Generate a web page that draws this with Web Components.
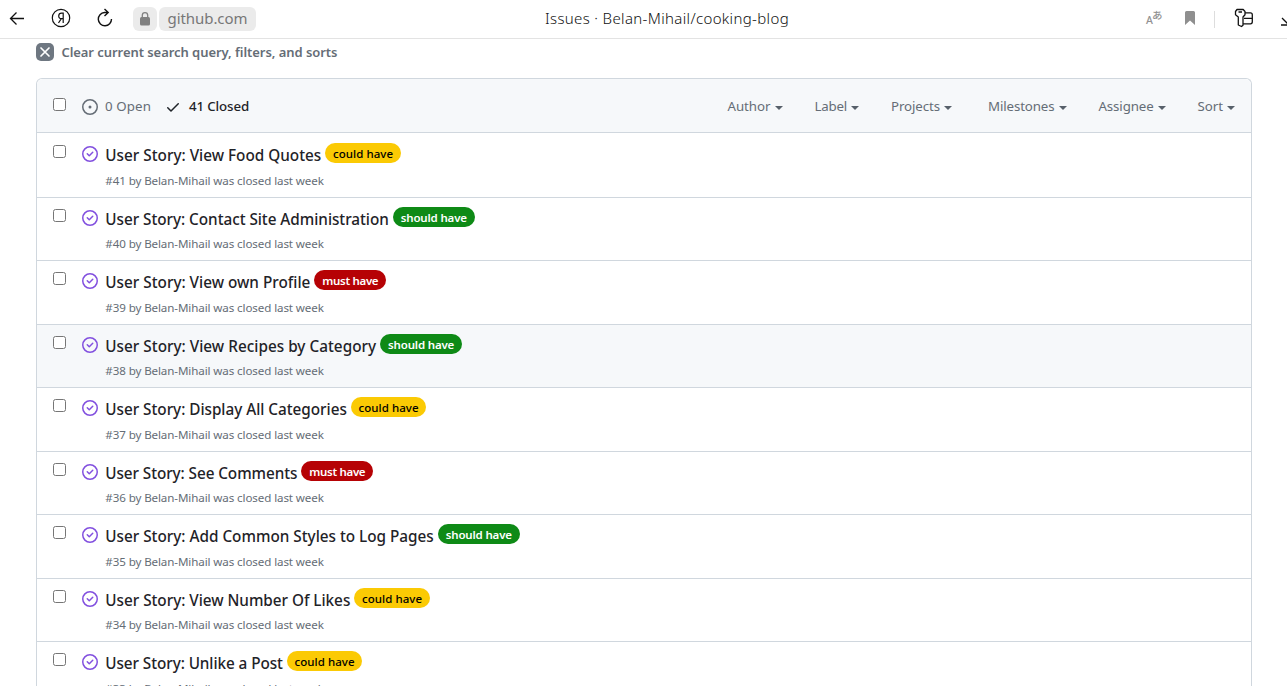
<!DOCTYPE html>
<html lang="en">
<head>
<meta charset="utf-8">
<title>Issues · Belan-Mihail/cooking-blog</title>
<style>
html,body{margin:0;height:100%;overflow:hidden;background:#fff}
body{font-family:"Noto Sans","Open Sans",sans-serif;color:#1f2328}
</style>
</head>
<body>
<app-page></app-page>
<script>
const define=(name,html,setup)=>{
  const t=document.createElement('template');t.innerHTML=html;
  customElements.define(name,class extends HTMLElement{
    connectedCallback(){
      if(this.shadowRoot)return;
      this.attachShadow({mode:'open'}).append(t.content.cloneNode(true));
      if(setup)setup(this,this.shadowRoot);
    }
  });
};

/* One line of text tracked to a given measure */
define('text-line',`<style>:host{display:block;white-space:pre;flex:none}span{display:inline-block}</style><span><slot></slot></span>`,(el,r)=>{
  const s=r.querySelector('span'),w=+el.getAttribute('w'),n=el.textContent.length;
  el.style.width=w+'px';
  s.style.letterSpacing=((w-s.getBoundingClientRect().width)/n)+'px';
});

define('check-box',`<style>:host{display:block;box-sizing:border-box;flex:none;width:13px;height:13px;border:1px solid #767676;border-radius:2.5px;background:#fff}</style>`);

define('label-pill',`<style>
:host{display:flex;flex:none;box-sizing:border-box;height:20px;border-radius:10px;justify-content:center;font-size:11.5px;line-height:21px;font-weight:600}
:host([kind=could]){background:#fbca04;color:#000;width:75.5px;font-weight:500}
:host([kind=should]){background:#0e8a16;color:#fff;width:82px}
:host([kind=must]){background:#b60205;color:#fff;width:72px}
</style><slot></slot>`);

define('issue-row',`<style>
:host{display:flex;box-sizing:border-box;height:64px;border-top:1px solid #d0d7de;padding-left:16px;align-items:flex-start;background:#fff}
:host([short]){height:63px}
:host([first]){border-top-color:transparent;background-clip:padding-box}
:host([hover]){background:#f6f8fa}
check-box{margin-top:11px}
svg{margin:12px 0 0 16px;flex:none}
.body{height:100%;display:flex;flex-direction:column;justify-content:space-between;margin-left:7.3px}
.top{display:flex;align-items:flex-start;gap:4px}
.title{font-size:15.3px;font-weight:460;line-height:22px;margin-top:10px}
label-pill{margin-top:9px}
.meta{font-size:11.6px;line-height:16px;color:#656d76;margin-bottom:8px}
</style>
<check-box></check-box>
<svg width="16" height="16" viewBox="0 0 16 16" fill="#8250df"><path d="M11.28 6.78a.75.75 0 0 0-1.06-1.06L7.25 8.69 5.78 7.22a.75.75 0 0 0-1.06 1.06l2 2a.75.75 0 0 0 1.06 0l3.5-3.5Z"/><path d="M16 8A8 8 0 1 1 0 8a8 8 0 0 1 16 0Zm-1.5 0a6.5 6.5 0 1 0-13 0 6.5 6.5 0 0 0 13 0Z"/></svg>
<div class="body"><div class="top"></div><div class="meta"></div></div>`,(el,r)=>{
  const a=k=>el.getAttribute(k),pw={could:60,should:66,must:56}[a('kind')];
  r.querySelector('.top').innerHTML=`<text-line class="title" w="${a('w')}">User Story: ${a('name')}</text-line><label-pill kind="${a('kind')}"><text-line w="${pw}">${a('kind')} have</text-line></label-pill>`;
  r.querySelector('.meta').innerHTML=`<text-line w="218.5">#${a('num')} by Belan-Mihail was closed last week</text-line>`;
});

define('filter-menu',`<style>
:host{display:flex;align-items:center;gap:4px;height:20px}
i{border:4px solid transparent;border-top-color:#57606a;border-bottom:0;margin-top:4px}
</style><slot></slot><i></i>`);

define('list-header',`<style>
:host{display:flex;box-sizing:border-box;height:54px;padding:0 16px;background:#f6f8fa;border-bottom:1px solid #d0d7de;font-size:13.3px;line-height:20px;color:#656d76;align-items:center;border-radius:6px 6px 0 0}
check-box{margin-bottom:3px}
svg{flex:none;margin-top:2px}
.o{margin:2px 7px 0 16px}.c{margin:2px 8px 0 14px}
b{font-weight:500;color:#1f2328}
nav{display:flex;flex:none;margin-left:auto}
filter-menu+filter-menu{margin-left:32px}
filter-menu.wide{margin-left:36px}
</style>
<check-box></check-box>
<svg class="o" width="16" height="16" viewBox="0 0 16 16" fill="#656d76"><path d="M8 9.5a1.5 1.5 0 1 0 0-3 1.5 1.5 0 0 0 0 3Z"/><path d="M8 0a8 8 0 1 1 0 16A8 8 0 0 1 8 0ZM1.500 8a6.500 6.500 0 1 0 13 0 6.500 6.500 0 0 0-13 0Z"/></svg>
<text-line w="46">0 Open</text-line>
<svg class="c" width="16" height="16" viewBox="0 0 16 16" fill="#1f2328"><path d="M13.780 4.220a.75.75 0 0 1 0 1.060l-7.250 7.250a.75.75 0 0 1-1.060 0L2.220 9.280a.75.75 0 0 1 1.060-1.060L6 10.940l6.720-6.720a.75.75 0 0 1 1.060 0Z"/></svg>
<b><text-line w="60">41 Closed</text-line></b>
<nav>
<filter-menu><text-line w="43">Author</text-line></filter-menu>
<filter-menu><text-line w="32.5">Label</text-line></filter-menu>
<filter-menu><text-line w="49">Projects</text-line></filter-menu>
<filter-menu class="wide"><text-line w="66.500">Milestones</text-line></filter-menu>
<filter-menu><text-line w="55">Assignee</text-line></filter-menu>
<filter-menu><text-line w="25.500">Sort</text-line></filter-menu>
</nav>`);

define('issue-list',`<style>
:host{display:block;margin:15px 35px 0 36px;border:1px solid #d0d7de;border-bottom:0;border-radius:6px 6px 0 0}
</style><list-header></list-header><slot></slot>`);

define('clear-filters',`<style>
:host{display:flex;align-items:center;height:22px;padding:2px 0 0 36px;gap:7.4px;font-size:13px;line-height:20px;font-weight:600;color:#656d76}
svg{flex:none}
</style><svg width="18" height="18" viewBox="0 0 18 18"><rect width="18" height="18" rx="5" fill="#6e7781"/><path d="M5 5l8 8M13 5l-8 8" stroke="#fff" stroke-width="1.700" stroke-linecap="round"/></svg>
<text-line w="276">Clear current search query, filters, and sorts</text-line>`);

define('browser-bar',`<style>
:host{display:grid;grid-template-columns:545px 1fr auto;box-sizing:border-box;height:39px;border-bottom:1px solid #e3e3e3;align-items:center;background:#fff;overflow:hidden}
div{display:flex;align-items:center;height:36px}
svg{flex:none;display:block}
.left{padding-left:8px}
.left>svg,.right>svg{margin-bottom:2px}
.lock,.host{height:24px;background:#ebebeb;border-radius:6px;display:flex;align-items:center;justify-content:center;margin-bottom:1px}
.lock{width:24px;margin-left:18px}
.host{width:97px;margin-left:2px;font-size:15px;line-height:20px;color:#777}
.host text-line{margin-bottom:2px}
.title{font-size:15px;color:#111;font-weight:350}
.title text-line{margin-bottom:2px}
.right{color:#929292}
.tr{display:flex;width:18px;height:18px;margin-bottom:2px}
.tr b{font-weight:500;font-size:10.500px;line-height:14px;margin-top:4px}
.tr small{font:500 10.500px/12px "Noto Sans CJK JP",sans-serif;margin-left:-1px}
.sep{width:1px;height:17px;background:#ddd;margin:0 19px 0 18px}
</style>
<div class="left">
<svg width="18" height="18" viewBox="0 0 18 18" fill="none" stroke="#111" stroke-width="1.300"><path d="M16 9.500H2.500M8.500 3.500L2.500 9.500l6 6"/></svg>
<svg style="margin-left:25px" width="20" height="20" viewBox="0 0 20 20" fill="none" stroke="#111" stroke-width="1.200"><circle cx="10" cy="10" r="8.700"/><path d="M12.200 15V5.200H10.600C6.800 5.200 6.800 10.700 10.300 10.700h1.900M10.300 10.700L7.500 15"/></svg>
<svg style="margin-left:24px" width="20" height="20" viewBox="0 0 20 20" fill="none" stroke="#111" stroke-width="1.400"><path d="M12.800 4.500H9.500a6.600 6.600 0 1 0 7 6.500M9.500 1l3.700 3.500L9.500 8"/></svg>
<span class="lock"><svg width="12" height="16" viewBox="0 0 12 16"><rect x="1" y="6" width="10" height="8.500" rx="1.500" fill="#808080"/><path d="M3.300 7V4.300a2.700 2.700 0 0 1 5.400 0V7" fill="none" stroke="#808080" stroke-width="1.300"/></svg></span>
<span class="host"><text-line w="80">github.com</text-line></span>
</div>
<div class="title"><text-line w="244">Issues · Belan-Mihail/cooking-blog</text-line></div>
<div class="right">
<span class="tr"><b>A</b><small>あ</small></span>
<svg style="margin-left:20px" width="12" height="16" viewBox="0 0 12 16"><path d="M1 2.500Q1 1 2.500 1h7Q11 1 11 2.500V15l-5-4.500L1 15Z" fill="#8f8f8f"/></svg>
<span class="sep"></span>
<svg width="20" height="20" viewBox="0 0 20 20" fill="none" stroke="#111" stroke-width="1.300" stroke-linejoin="round"><path d="M3 1.500h6.200L11 3.500v3.300L9 9v8.300L7.500 18.500 4.300 17V9L1.500 6.800V3.500ZM4.500 4h3.500M11 4.800h5.500q1.800 0 1.800 2v7q0 2-1.800 2H9M10 10.300h8.300"/></svg>
<svg style="margin-left:27px" width="6" height="20" viewBox="0 0 6 20" fill="none" stroke="#111" stroke-width="1.300"><path d="M1 10l6 6M0 17h7"/></svg>
</div>`);

define('app-page',`<style>:host{display:block;height:686px;overflow:hidden}</style>
<browser-bar></browser-bar>
<clear-filters></clear-filters>
<issue-list>
<issue-row first num="41" name="View Food Quotes" kind="could" w="216"></issue-row>
<issue-row short num="40" name="Contact Site Administration" kind="should" w="283.500"></issue-row>
<issue-row num="39" name="View own Profile" kind="must" w="205"></issue-row>
<issue-row short hover num="38" name="View Recipes by Category" kind="should" w="270.800"></issue-row>
<issue-row num="37" name="Display All Categories" kind="could" w="241.500"></issue-row>
<issue-row short num="36" name="See Comments" kind="must" w="192"></issue-row>
<issue-row num="35" name="Add Common Styles to Log Pages" kind="should" w="328.500"></issue-row>
<issue-row short num="34" name="View Number Of Likes" kind="could" w="245"></issue-row>
<issue-row num="33" name="Unlike a Post" kind="could" w="177.500"></issue-row>
</issue-list>`);
</script>
</body>
</html>
